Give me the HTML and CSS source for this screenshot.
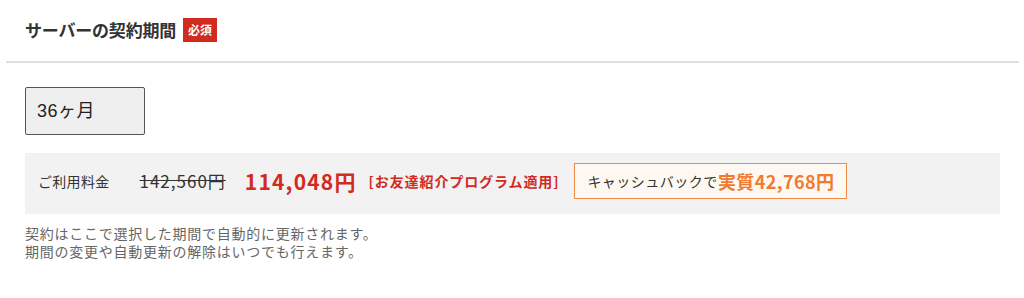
FILE: index.html
```html
<!DOCTYPE html>
<html lang="ja">
<head>
<meta charset="utf-8">
<link rel="stylesheet" href="styles.css">
</head>
<body>
<section class="term">
  <header class="term-head">
    <h2 class="term-title">サーバーの契約期間</h2>
    <span class="badge">必須</span>
  </header>
  <div class="term-body">
    <div class="select">36ヶ月</div>
    <div class="price-panel">
      <span class="price-label">ご利用料金</span>
      <span class="price-old">142,560円</span>
      <span class="price-new">114,048円</span>
      <span class="price-note">[お友達紹介プログラム適用]</span>
      <span class="cashback">キャッシュバックで<strong class="cashback-amount">実質42,768円</strong></span>
    </div>
    <p class="notes">契約はここで選択した期間で自動的に更新されます。<br>期間の変更や自動更新の解除はいつでも行えます。</p>
  </div>
</section>
</body>
</html>
```

FILE: styles.css
```css
* { box-sizing: border-box; }
body {
  margin: 0;
  background: #fff;
  font-family: "Noto Sans CJK JP", "Noto Sans", sans-serif;
  color: #333;
}
.term-head {
  display: flex;
  align-items: center;
  margin: 0 5px 0 6px;
  padding: 18px 0 19px 19px;
  border-bottom: 2px solid #dedede;
}
.term-title {
  margin: 0;
  font-size: 17px;
  font-weight: 700;
  line-height: 24px;
  letter-spacing: -0.2px;
  color: #333;
}
.badge {
  margin-left: 7px;
  background: #d12a1e;
  color: #fff;
  font-size: 12px;
  font-weight: 700;
  line-height: 24px;
  padding: 0 5px;
  height: 24px;
}
.term-body {
  padding: 25px 24px 0 25px;
}
.select {
  width: 120px;
  height: 48px;
  margin-top: -1px;
  border: 1px solid #555;
  border-radius: 2px;
  background: #efefef;
  font-family: "Liberation Sans", "Noto Sans CJK JP", sans-serif;
  font-size: 18px;
  letter-spacing: 0.5px;
  line-height: 46px;
  padding-left: 11px;
  color: #222;
}
.price-panel {
  margin-top: 18px;
  background: #f2f2f2;
  height: 61px;
  display: flex;
  align-items: center;
  padding: 0 0 6px 13px;
}
.price-label {
  font-size: 14px;
  letter-spacing: 0.3px;
  color: #333;
}
.price-old {
  margin-left: 30px;
  font-size: 17px;
  letter-spacing: 1px;
  text-decoration: line-through;
  color: #333;
}
.price-new {
  margin-left: 19px;
  font-size: 21px;
  font-weight: 700;
  letter-spacing: 1.2px;
  color: #d12a1e;
}
.price-note {
  margin-left: 12px;
  font-size: 14px;
  font-weight: 700;
  letter-spacing: 0.9px;
  color: #d12a1e;
}
.cashback {
  margin-left: 15px;
  height: 36px;
  display: flex;
  align-items: center;
  padding: 0 12px 0 12px;
  border: 1px solid #f08a45;
  background: #fdf8f1;
  font-size: 14px;
  letter-spacing: 0.5px;
  color: #333;
}
.cashback-amount {
  font-size: 18px;
  font-weight: 700;
  color: #f07a30;
  letter-spacing: 0.4px;
}
.notes {
  margin: 10px 0 0;
  font-size: 14px;
  line-height: 18px;
  letter-spacing: 0.75px;
  color: #666;
}
```
